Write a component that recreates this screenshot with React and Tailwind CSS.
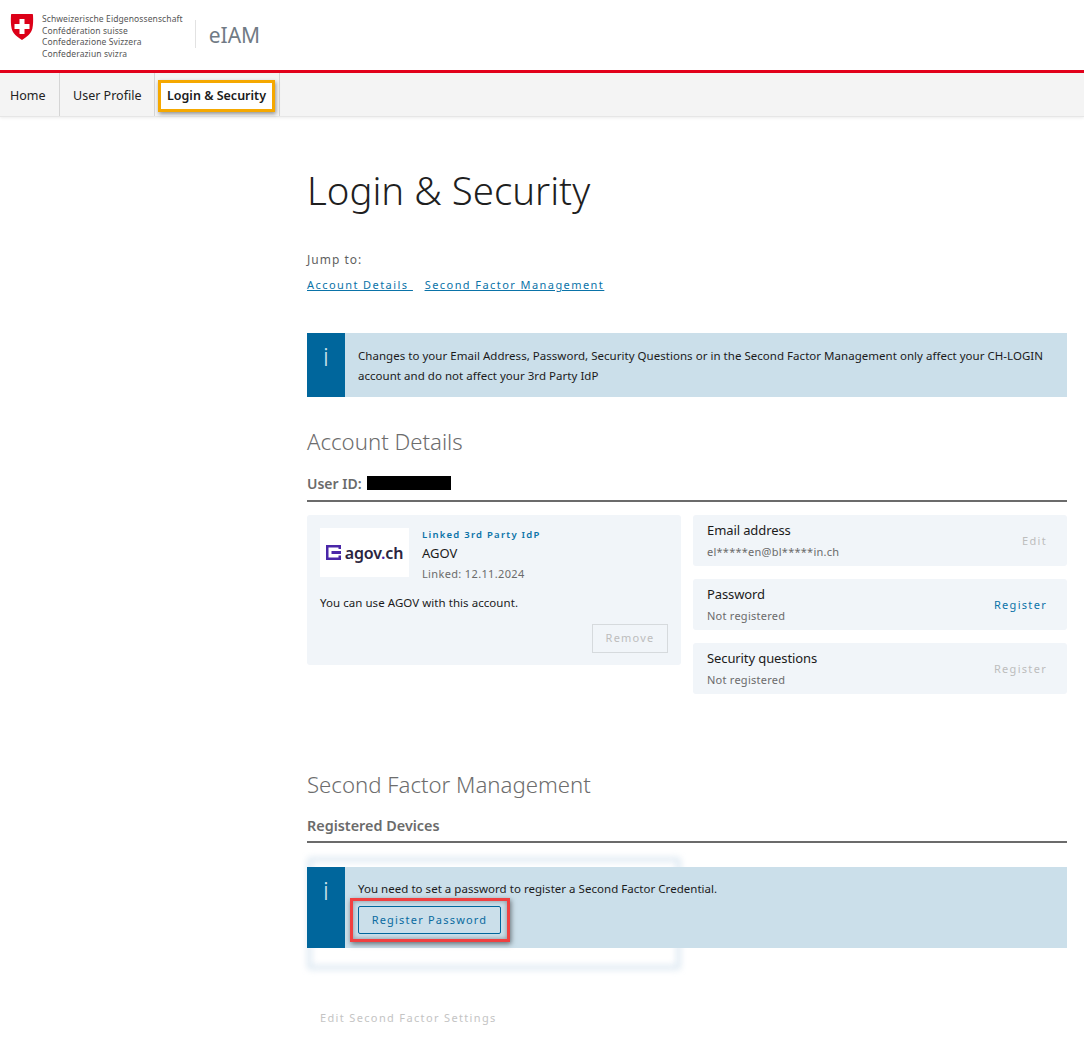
const font = { fontFamily: '"Noto Sans", "Open Sans", sans-serif' };

function SwissShield() {
  return (
    <svg width="24" height="28" viewBox="0 0 24 28" className="shrink-0">
      <path d="M2 1h20c.7 0 1 .4 1 1 .3 5 .2 9.500-.6 13.500-1.200 4.800-5.400 8.500-10.400 11.500-5-3-9.200-6.700-10.400-11.500C.8 11.500.7 7 1 2c0-.6.300-1 1-1z" fill="#dc0018" />
      <path d="M9.500 6h5v5h5v5h-5v5h-5v-5h-5v-5h5z" fill="#fff" />
    </svg>
  );
}

function InfoBox({ children, className }) {
  return (
    <div className={`relative flex bg-[#cbdfea] ${className}`}>
      <div className="w-[38px] shrink-0 bg-[#00669c] text-center text-[25px] leading-[46px] font-light text-[#d5e6ef]">
        i
      </div>
      <div className="flex-1 pl-[13px] text-[11.500px] tracking-[0.03px] text-[#1b1b1b]">{children}</div>
    </div>
  );
}

function DetailRow({ title, value, action, disabled }) {
  return (
    <div className="flex h-[51px] items-center justify-between rounded-[3px] bg-[#f1f5f9] pr-[20px] pl-[14px]">
      <div>
        <p className="text-[13px] leading-[19px] tracking-[-0.1px] text-[#1b1b1b]">{title}</p>
        <p className="mt-[4px] text-[11px] leading-[16px] tracking-[0.25px] text-[#6b6b6b]">{value}</p>
      </div>
      <span className={`pt-[2px] text-[11px] tracking-[1.300px] ${disabled ? "text-[#bdbdbd]" : "text-[#0a73a8]"}`}>{action}</span>
    </div>
  );
}

export default function App() {
  return (
    <div style={font} className="min-h-[1037px] overflow-hidden bg-white">
      {/* Header */}
      <header className="flex h-[70px] items-start pt-[13px] pl-[10px]">
        <SwissShield />
        <div className="ml-[8px] text-[8.500px] leading-[11.500px] tracking-[0.1px] text-[#555]">
          <p>Schweizerische Eidgenossenschaft</p>
          <p>Confédération suisse</p>
          <p>Confederazione Svizzera</p>
          <p>Confederaziun svizra</p>
        </div>
        <div className="mt-[7px] ml-[12px] h-[28px] w-px bg-[#e2e2e2]" />
        <span className="mt-[6px] ml-[13px] text-[21px] leading-[32px] text-[#717b85]">eIAM</span>
      </header>
      <div className="h-[3px] bg-[#e3001b]" />

      {/* Nav */}
      <nav className="flex h-[44px] border-b border-[#e6e6e6] bg-[#f4f4f4] shadow-[0_1px_3px_rgba(0,0,0,0.08)]">
        <a className="flex w-[60px] items-center border-r border-[#d5d5d5] pt-[4px] pl-[10px] text-[12.500px] text-[#222]">Home</a>
        <a className="flex w-[95px] items-center border-r border-[#d5d5d5] pt-[4px] pl-[13px] text-[12.500px] text-[#222]">User Profile</a>
        <div className="flex w-[125px] items-center border-r border-[#d5d5d5] pt-[3px] pl-[3px]">
          <a className="flex h-[32px] w-[117px] items-center justify-center border-[3px] border-[#f5a800] bg-white text-[12.500px] font-semibold text-[#1b1b1b] shadow-[1px_2px_4px_rgba(0,0,0,0.4)]">
            Login &amp; Security
          </a>
        </div>
      </nav>

      {/* Content */}
      <main className="pr-[17px] pl-[307px]">
        <h1 className="mt-[46px] text-[38.400px] leading-[54px] font-light text-[#1f1f1f]">Login &amp; Security</h1>

        <p className="mt-[34px] text-[12px] leading-[18px] tracking-[1px] text-[#5f5f5f]">Jump to:</p>
        <div className="mt-[8px] flex gap-[12px] text-[11px] leading-[16px] tracking-[1.430px] text-[#0a73a8] underline">
          <a>Account Details&nbsp;</a>
          <a>Second Factor Management</a>
        </div>

        <InfoBox className="mt-[40px] h-[64px]">
          <p className="pt-[13px] leading-[20px]">
            Changes to your Email Address, Password, Security Questions or in the Second Factor Management only affect your CH-LOGIN account and do not affect your 3rd Party IdP
          </p>
        </InfoBox>

        <h2 className="mt-[28px] text-[22.200px] leading-[34px] font-light text-[#6d6d6d]">Account Details</h2>
        <div className="mt-[15px] flex h-[28px] items-start border-b-2 border-[#6b6b6b]">
          <span className="text-[14px] leading-[20px] font-semibold text-[#6b6b6b]">User ID:</span>
          <span className="mt-[2px] ml-[5px] h-[14px] w-[84px] bg-black" />
        </div>

        <div className="mt-[13px] grid grid-cols-[374px_374px] gap-x-[12px]">
          <div className="h-[150px] rounded-[3px] bg-[#f1f5f9] px-[13px] pt-[13px]">
            <div className="flex">
              <div className="flex h-[49px] w-[89px] items-center justify-center gap-[4px] bg-white">
                <svg width="15" height="15" viewBox="0 0 15 15">
                  <path d="M0 0h15v4h-2.500V2.500h-10v10h10v-2H15V15H0z" fill="#4a27a8" />
                  <path d="M5.500 6H15v3H5.500z" fill="#4a27a8" />
                </svg>
                <span className="text-[16px] font-semibold tracking-[-0.2px] text-[#2b2540]">agov<span className="text-[#4a27a8]">.</span>ch</span>
              </div>
              <div className="ml-[13px]">
                <p className="text-[9.500px] leading-[13px] font-semibold tracking-[1.250px] text-[#0a73a8]">Linked 3rd Party IdP</p>
                <p className="mt-[3px] text-[13px] leading-[18px] text-[#1b1b1b]">AGOV</p>
                <p className="mt-[4px] text-[11px] leading-[16px] tracking-[0.35px] text-[#6b6b6b]">Linked: 12.11.2024</p>
              </div>
            </div>
            <p className="mt-[12px] text-[11.500px] leading-[18px] tracking-[0.05px] text-[#1b1b1b]">You can use AGOV with this account.</p>
            <div className="mt-[12px] flex justify-end">
              <button className="h-[29px] w-[76px] border border-[#d6dadd] text-[11px] tracking-[1.200px] text-[#bdbdbd]">Remove</button>
            </div>
          </div>

          <div className="flex flex-col gap-[13px]">
            <DetailRow title="Email address" value="el*****en@bl*****in.ch" action="Edit" disabled />
            <DetailRow title="Password" value="Not registered" action="Register" />
            <DetailRow title="Security questions" value="Not registered" action="Register" disabled />
          </div>
        </div>

        <h2 className="mt-[74px] text-[22.200px] leading-[34px] font-light text-[#6d6d6d]">Second Factor Management</h2>
        <div className="mt-[14px] flex h-[27px] items-start border-b-2 border-[#6b6b6b]">
          <span className="text-[14.400px] leading-[20px] font-semibold text-[#6b6b6b]">Registered Devices</span>
        </div>

        <div className="relative mt-[24px]">
          {/* blurred card behind the notice */}
          <div className="absolute top-[-10px] left-0 h-[113px] w-[374px] rounded-[4px] border-[5px] border-[#dfeaf3] blur-[3px]" />
          <InfoBox className="h-[81px]">
            <p className="pt-[13px] leading-[18px]">You need to set a password to register a Second Factor Credential.</p>
            <div className="relative ml-[-8px] flex h-[44px] w-[160px] items-center border-[3px] border-[#f04040] pl-[5px] shadow-[1px_2px_5px_rgba(0,0,0,0.5),inset_0_0_5px_rgba(0,0,0,0.35)]">
              <button className="h-[28px] w-[143px] rounded-[2px] border border-[#00669c] bg-[#cbdfea] text-[11px] tracking-[1.200px] text-[#0a6ba0]">Register Password</button>
            </div>
          </InfoBox>
        </div>

        <p className="mt-[62px] pl-[13px] text-[11px] leading-[16px] tracking-[1.350px] text-[#c4c4c4]">Edit Second Factor Settings</p>
      </main>
    </div>
  );
}
